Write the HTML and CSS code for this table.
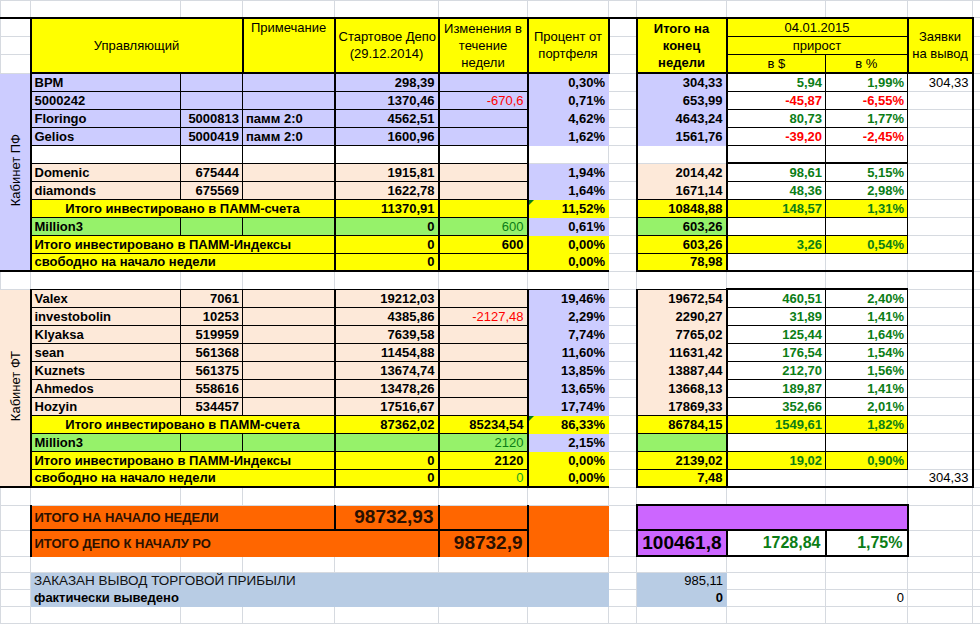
FILE: index.html
```html
<!DOCTYPE html>
<html lang="ru">
<head>
<meta charset="utf-8">
<title>Отчёт ПАММ</title>
<link rel="stylesheet" href="styles.css">
</head>
<body>
<table class="sheet">
<colgroup>
<col class="cA"><col class="cB"><col class="cC"><col class="cD"><col class="cE"><col class="cF"><col class="cG"><col class="cH"><col class="cI"><col class="cJ"><col class="cK"><col class="cL"><col class="cM">
</colgroup>
<tbody>
<tr class="r0"><td class="B2"></td><td class="B2"></td><td class="B2"></td><td class="B2"></td><td class="B2"></td><td class="B2"></td><td class="B2"></td><td class="B2"></td><td class="B2"></td><td class="B2"></td><td class="B2"></td><td class="B2"></td><td></td></tr>

<tr class="h1">
<td></td>
<td colspan="2" rowspan="3" class="y hd c mid T2 L2 R2 B2">Управляющий</td>
<td rowspan="3" class="y hd c top T2 L2 R2 B2">Примечание</td>
<td rowspan="3" class="y hd c mid T2 L2 R2 B2">Стартовое Депо<br>(29.12.2014)</td>
<td rowspan="3" class="y hd c mid T2 L2 R2 B2">Изменения в<br>течение<br>недели</td>
<td rowspan="3" class="y hd c mid T2 L2 R2 B2">Процент от<br>портфеля</td>
<td></td>
<td rowspan="3" class="y hb c mid T2 L2 R2 B2">Итого на<br>конец<br>недели</td>
<td colspan="2" class="y hd c T2 L2 R2 B1">04.01.2015</td>
<td rowspan="3" class="y hd c mid T2 L2 R2 B2">Заявки<br>на вывод</td>
<td></td>
</tr>
<tr class="h2">
<td></td><td></td>
<td colspan="2" class="y hd c L2 R2 B1">прирост</td>
<td></td>
</tr>
<tr class="h3">
<td></td><td></td>
<td class="y hd c L2 R1 B2">в $</td>
<td class="y hd c R2 B2">в %</td>
<td></td>
</tr>

<!-- Кабинет ПФ -->
<tr class="d">
<td rowspan="11" class="lv vc B2"><span class="vert">Кабинет ПФ</span></td>
<td class="lv L2 R1 B1">BPM</td>
<td class="lv R1 B1"></td>
<td class="lv R2 B1"></td>
<td class="lv R2 B1 r">298,39</td>
<td class="lv R2 B1"></td>
<td class="lv r">0,30%</td>
<td></td>
<td class="lv L2 R2 r">304,33</td>
<td class="R1 B1 r g">5,94</td>
<td class="R1 B1 r g">1,99%</td>
<td class="R2 r n">304,33</td>
<td></td>
</tr>
<tr class="d">
<td class="lv L2 R1 B1">5000242</td>
<td class="lv R1 B1"></td>
<td class="lv R2 B1"></td>
<td class="lv R2 B1 r">1370,46</td>
<td class="lv R2 B1 r rd n">-670,6</td>
<td class="lv r">0,71%</td>
<td></td>
<td class="lv L2 R2 r">653,99</td>
<td class="R1 B1 r rd">-45,87</td>
<td class="R1 B1 r rd">-6,55%</td>
<td class="R2"></td>
<td></td>
</tr>
<tr class="d">
<td class="lv L2 R1 B1">Floringo</td>
<td class="lv R1 B1 r">5000813</td>
<td class="lv R2 B1">памм 2:0</td>
<td class="lv R2 B1 r">4562,51</td>
<td class="lv R2 B1"></td>
<td class="lv r">4,62%</td>
<td></td>
<td class="lv L2 R2 r">4643,24</td>
<td class="R1 B1 r g">80,73</td>
<td class="R1 B1 r g">1,77%</td>
<td class="R2"></td>
<td></td>
</tr>
<tr class="d">
<td class="lv L2 R1 B1">Gelios</td>
<td class="lv R1 B1 r">5000419</td>
<td class="lv R2 B1">памм 2:0</td>
<td class="lv R2 B1 r">1600,96</td>
<td class="lv R2 B1"></td>
<td class="lv r">1,62%</td>
<td></td>
<td class="lv L2 R2 r">1561,76</td>
<td class="R1 B1 r rd">-39,20</td>
<td class="R1 B1 r rd">-2,45%</td>
<td class="R2"></td>
<td></td>
</tr>
<tr class="d">
<td class="L2 R1 B1"></td>
<td class="R1 B1"></td>
<td class="R2 B1"></td>
<td class="R2 B1"></td>
<td class="R2 B1"></td>
<td></td>
<td></td>
<td class="L2 R2"></td>
<td class="R1 B2"></td>
<td class="R1 B2"></td>
<td class="R2"></td>
<td></td>
</tr>
<tr class="d">
<td class="pc L2 R1 B1">Domenic</td>
<td class="pc R1 B1 r">675444</td>
<td class="pc R2 B1"></td>
<td class="pc R2 B1 r">1915,81</td>
<td class="pc R2 B1"></td>
<td class="lv r">1,94%</td>
<td></td>
<td class="pc L2 R2 r">2014,42</td>
<td class="R1 B1 r g">98,61</td>
<td class="R1 B1 r g">5,15%</td>
<td class="R2"></td>
<td></td>
</tr>
<tr class="d">
<td class="pc L2 R1 B1">diamonds</td>
<td class="pc R1 B1 r">675569</td>
<td class="pc R2 B1"></td>
<td class="pc R2 B1 r">1622,78</td>
<td class="pc R2 B1"></td>
<td class="lv r">1,64%</td>
<td></td>
<td class="pc L2 R2 r">1671,14</td>
<td class="R1 B1 r g">48,36</td>
<td class="R1 B1 r g">2,98%</td>
<td class="R2"></td>
<td></td>
</tr>
<tr class="d">
<td colspan="3" class="y L2 R2 B1 c">Итого инвестировано в ПАММ-счета</td>
<td class="y R2 B1 r">11370,91</td>
<td class="y R2 B1"></td>
<td class="y r tri">11,52%</td>
<td></td>
<td class="y L2 R2 T1 B1 r">10848,88</td>
<td class="y R1 B1 r g">148,57</td>
<td class="y R1 B1 r g">1,31%</td>
<td class="R2"></td>
<td></td>
</tr>
<tr class="d">
<td class="gn L2 R1 B1">Million3</td>
<td class="gn R1 B1"></td>
<td class="gn R2 B1"></td>
<td class="gn R2 B1 r">0</td>
<td class="gn R2 B1 r g n">600</td>
<td class="lv r">0,61%</td>
<td></td>
<td class="gn L2 R2 B1 r">603,26</td>
<td class="R1 B1"></td>
<td class="R1 B1"></td>
<td class="R2"></td>
<td></td>
</tr>
<tr class="d">
<td colspan="3" class="y L2 R2 B1">Итого инвестировано в ПАММ-Индексы</td>
<td class="y R2 B1 r">0</td>
<td class="y R2 B1 r">600</td>
<td class="y r">0,00%</td>
<td></td>
<td class="y L2 R2 B1 r">603,26</td>
<td class="y R1 B1 r g">3,26</td>
<td class="y R1 B1 r g">0,54%</td>
<td class="R2"></td>
<td></td>
</tr>
<tr class="d">
<td colspan="3" class="y L2 R2 B2">свободно на начало недели</td>
<td class="y R2 B2 r">0</td>
<td class="y R2 B2"></td>
<td class="y B2 r">0,00%</td>
<td></td>
<td class="y L2 R2 B2 r">78,98</td>
<td class="B2"></td>
<td class="B2"></td>
<td class="R2 B2"></td>
<td></td>
</tr>

<tr class="d"><td></td><td></td><td></td><td></td><td></td><td></td><td></td><td></td><td></td><td></td><td></td><td class="R2"></td><td></td></tr>

<!-- Кабинет ФТ -->
<tr class="d">
<td rowspan="11" class="pc vc B2"><span class="vert">Кабинет ФТ</span></td>
<td class="pc T1 L2 R1 B1">Valex</td>
<td class="pc T1 R1 B1 r">7061</td>
<td class="pc T1 R2 B1"></td>
<td class="pc T1 R2 B1 r">19212,03</td>
<td class="pc T1 R2 B1"></td>
<td class="lv T1 r">19,46%</td>
<td></td>
<td class="pc T1 L2 R2 r">19672,54</td>
<td class="T2 R1 B1 r g">460,51</td>
<td class="T2 R1 B1 r g">2,40%</td>
<td class="R2"></td>
<td></td>
</tr>
<tr class="d">
<td class="pc L2 R1 B1">investobolin</td>
<td class="pc R1 B1 r">10253</td>
<td class="pc R2 B1"></td>
<td class="pc R2 B1 r">4385,86</td>
<td class="pc R2 B1 r rd n">-2127,48</td>
<td class="lv r">2,29%</td>
<td></td>
<td class="pc L2 R2 r">2290,27</td>
<td class="R1 B1 r g">31,89</td>
<td class="R1 B1 r g">1,41%</td>
<td class="R2"></td>
<td></td>
</tr>
<tr class="d">
<td class="pc L2 R1 B1">Klyaksa</td>
<td class="pc R1 B1 r">519959</td>
<td class="pc R2 B1"></td>
<td class="pc R2 B1 r">7639,58</td>
<td class="pc R2 B1"></td>
<td class="lv r">7,74%</td>
<td></td>
<td class="pc L2 R2 r">7765,02</td>
<td class="R1 B1 r g">125,44</td>
<td class="R1 B1 r g">1,64%</td>
<td class="R2"></td>
<td></td>
</tr>
<tr class="d">
<td class="pc L2 R1 B1">sean</td>
<td class="pc R1 B1 r">561368</td>
<td class="pc R2 B1"></td>
<td class="pc R2 B1 r">11454,88</td>
<td class="pc R2 B1"></td>
<td class="lv r">11,60%</td>
<td></td>
<td class="pc L2 R2 r">11631,42</td>
<td class="R1 B1 r g">176,54</td>
<td class="R1 B1 r g">1,54%</td>
<td class="R2"></td>
<td></td>
</tr>
<tr class="d">
<td class="pc L2 R1 B1">Kuznets</td>
<td class="pc R1 B1 r">561375</td>
<td class="pc R2 B1"></td>
<td class="pc R2 B1 r">13674,74</td>
<td class="pc R2 B1"></td>
<td class="lv r">13,85%</td>
<td></td>
<td class="pc L2 R2 r">13887,44</td>
<td class="R1 B1 r g">212,70</td>
<td class="R1 B1 r g">1,56%</td>
<td class="R2"></td>
<td></td>
</tr>
<tr class="d">
<td class="pc L2 R1 B1">Ahmedos</td>
<td class="pc R1 B1 r">558616</td>
<td class="pc R2 B1"></td>
<td class="pc R2 B1 r">13478,26</td>
<td class="pc R2 B1"></td>
<td class="lv r">13,65%</td>
<td></td>
<td class="pc L2 R2 r">13668,13</td>
<td class="R1 B1 r g">189,87</td>
<td class="R1 B1 r g">1,41%</td>
<td class="R2"></td>
<td></td>
</tr>
<tr class="d">
<td class="pc L2 R1 B1">Hozyin</td>
<td class="pc R1 B1 r">534457</td>
<td class="pc R2 B1"></td>
<td class="pc R2 B1 r">17516,67</td>
<td class="pc R2 B1"></td>
<td class="lv r">17,74%</td>
<td></td>
<td class="pc L2 R2 r">17869,33</td>
<td class="R1 B1 r g">352,66</td>
<td class="R1 B1 r g">2,01%</td>
<td class="R2"></td>
<td></td>
</tr>
<tr class="d">
<td colspan="3" class="y L2 R2 B1 c">Итого инвестировано в ПАММ-счета</td>
<td class="y R2 B1 r">87362,02</td>
<td class="y R2 B1 r">85234,54</td>
<td class="y r tri">86,33%</td>
<td></td>
<td class="y L2 R2 T1 B1 r">86784,15</td>
<td class="y R1 B1 r g">1549,61</td>
<td class="y R1 B1 r g">1,82%</td>
<td class="R2"></td>
<td></td>
</tr>
<tr class="d">
<td class="gn L2 R1 B1">Million3</td>
<td class="gn R1 B1"></td>
<td class="gn R2 B1"></td>
<td class="gn R2 B1"></td>
<td class="gn R2 B1 r g n">2120</td>
<td class="lv r">2,15%</td>
<td></td>
<td class="gn L2 R2 B1"></td>
<td class="R1 B1"></td>
<td class="R1 B1"></td>
<td class="R2"></td>
<td></td>
</tr>
<tr class="d">
<td colspan="3" class="y L2 R2 B1">Итого инвестировано в ПАММ-Индексы</td>
<td class="y R2 B1 r">0</td>
<td class="y R2 B1 r">2120</td>
<td class="y r">0,00%</td>
<td></td>
<td class="y L2 R2 B1 r">2139,02</td>
<td class="y R1 B1 r g">19,02</td>
<td class="y R1 B1 r g">0,90%</td>
<td class="R2"></td>
<td></td>
</tr>
<tr class="d">
<td colspan="3" class="y L2 R2 B2">свободно на начало недели</td>
<td class="y R2 B2 r">0</td>
<td class="y R2 B2 r lg n">0</td>
<td class="y B2 r">0,00%</td>
<td></td>
<td class="y L2 R2 B2 r">7,48</td>
<td class="B2"></td>
<td class="B2"></td>
<td class="R2 B2 r n">304,33</td>
<td></td>
</tr>

<tr class="d"><td></td><td></td><td></td><td></td><td></td><td></td><td></td><td></td><td></td><td></td><td></td><td></td><td></td></tr>

<tr class="big1">
<td></td>
<td colspan="3" class="or lbl L2 B2">ИТОГО НА НАЧАЛО НЕДЕЛИ</td>
<td class="or L2 R2 B2 r big">98732,93</td>
<td class="or R2 B2"></td>
<td rowspan="2" class="or"></td>
<td></td>
<td colspan="3" class="pu T2 L2 R2 B2"></td>
<td></td>
<td></td>
</tr>
<tr class="big2">
<td></td>
<td colspan="4" class="or lbl L2 R2">ИТОГО ДЕПО К НАЧАЛУ РО</td>
<td class="or R2 r big">98732,9</td>
<td></td>
<td class="pu L2 R2 B2 r big">100461,8</td>
<td class="R2 B2 r g mid16">1728,84</td>
<td class="R2 B2 r g mid16">1,75%</td>
<td></td>
<td></td>
</tr>

<tr class="b16"><td></td><td></td><td></td><td></td><td></td><td></td><td></td><td></td><td></td><td></td><td></td><td></td><td></td></tr>

<tr class="z">
<td></td>
<td colspan="6" class="bl n zl">ЗАКАЗАН ВЫВОД ТОРГОВОЙ ПРИБЫЛИ</td>
<td></td>
<td class="bl r n">985,11</td>
<td></td>
<td></td>
<td></td>
<td></td>
</tr>
<tr class="z">
<td></td>
<td colspan="6" class="bl">фактически выведено</td>
<td></td>
<td class="bl r">0</td>
<td></td>
<td class="r n">0</td>
<td></td>
<td></td>
</tr>
<tr class="z"><td></td><td></td><td></td><td></td><td></td><td></td><td></td><td></td><td></td><td></td><td></td><td></td><td></td></tr>
<tr class="z"><td></td><td></td><td></td><td></td><td></td><td></td><td></td><td></td><td></td><td></td><td></td><td></td><td></td></tr>
</tbody>
</table>
</body>
</html>
```

FILE: styles.css
```css
html, body {
  margin: 0;
  padding: 0;
  background: #ffffff;
}
body {
  width: 980px;
  height: 624px;
  overflow: hidden;
  font-family: "Liberation Sans", Arial, sans-serif;
}
.sheet {
  border-collapse: collapse;
  table-layout: fixed;
  width: 980px;
  font-size: 13px;
  font-weight: bold;
  color: #000;
}
.cA { width: 30px; }
.cB { width: 150px; }
.cC { width: 62px; }
.cD { width: 92px; }
.cE { width: 104px; }
.cF { width: 89px; }
.cG { width: 81px; }
.cH { width: 28px; }
.cI { width: 90px; }
.cJ { width: 99px; }
.cK { width: 82px; }
.cL { width: 65px; }
.cM { width: 8px; }

.sheet td {
  border: 1px solid #d6dae0;
  padding: 0 3px 0 3px;
  line-height: 15px;
  vertical-align: middle;
  white-space: nowrap;
  overflow: hidden;
  text-align: left;
}

/* row heights */
.r0 { height: 17px; }
.h1 { height: 19px; }
.h2 { height: 18px; }
.h3 { height: 18px; }
.d { height: 18px; }
.big1 { height: 25px; }
.big2 { height: 26px; }
.b16 { height: 16px; }
.z { height: 17px; }

/* fills */
.sheet .y { background: #ffff00; border-color: #ffff00; }
.sheet .lv { background: #ccccff; border-color: #ccccff; }
.sheet .pc { background: #fde9d9; border-color: #fde9d9; }
.sheet .gn { background: #96f26a; border-color: #96f26a; }
.sheet .or { background: #ff6600; border-color: #ff6600; color: #2a1000; }
.sheet .pu { background: #cc66ff; border-color: #cc66ff; }
.sheet .bl { background: #b8cce4; border-color: #b8cce4; }

/* borders */
.sheet .T1 { border-top: 1px double #000; }
.sheet .B1 { border-bottom: 1px double #000; }
.sheet .L1 { border-left: 1px double #000; }
.sheet .R1 { border-right: 1px double #000; }
.sheet .T2 { border-top: 2px solid #000; }
.sheet .B2 { border-bottom: 2px solid #000; }
.sheet .L2 { border-left: 2px solid #000; }
.sheet .R2 { border-right: 2px solid #000; }

/* text */
.sheet .r { text-align: right; }
.sheet .c { text-align: center; }
.sheet .n { font-weight: normal; }
.sheet .g { color: #0b7d16; }
.sheet .rd { color: #ff0000; }
.sheet .lg { color: #17a51f; }

.sheet .hd { font-weight: normal; line-height: 17px; }
.sheet .hb { font-weight: bold; line-height: 17px; }
.sheet .mid { vertical-align: middle; }
.sheet .top { vertical-align: top; }

.sheet .vc { text-align: center; vertical-align: middle; padding: 0; }
.vert {
  display: inline-block;
  writing-mode: vertical-rl;
  transform: rotate(180deg);
  font-weight: normal;
  font-size: 13px;
  line-height: 15px;
}

.sheet .tri { position: relative; }
.sheet .tri::before {
  content: "";
  position: absolute;
  left: 0;
  top: 0;
  border-top: 5px solid #0b7d16;
  border-right: 5px solid transparent;
}

.sheet .lbl { font-size: 13px; padding-left: 3px; }
.sheet .big { font-size: 19px; line-height: 22px; padding-right: 4px; }
.sheet .mid16 { font-size: 16px; line-height: 20px; padding-right: 4px; }
.sheet .zl { font-size: 13.5px; color: #111; }
```
